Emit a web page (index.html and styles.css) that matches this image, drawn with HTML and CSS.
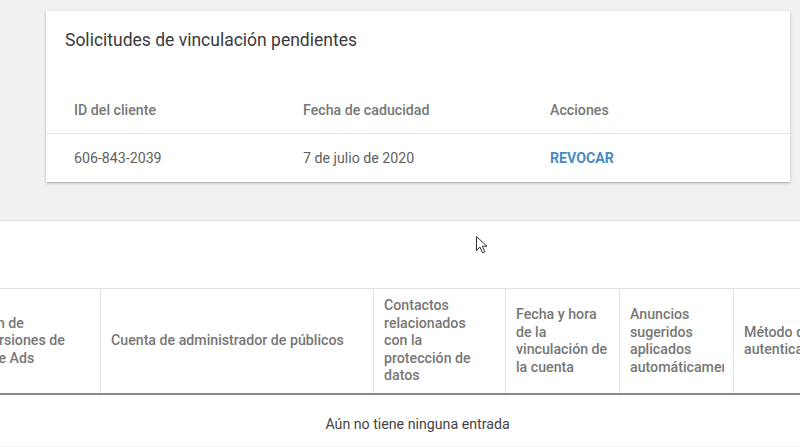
FILE: index.html
```html
<!DOCTYPE html>
<html lang="es">
    <head>
        <meta charset="UTF-8" />
        <link rel="stylesheet" href="styles.css">
    </head>
    <body>
        <div class="top">
            <div class="card">
                <div class="card_title">Solicitudes de vinculación pendientes</div>
                <div class="req_row req_head">
                    <div>ID del cliente</div>
                    <div>Fecha de caducidad</div>
                    <div>Acciones</div>
                </div>
                <div class="req_row req_data">
                    <div>606-843-2039</div>
                    <div>7 de julio de 2020</div>
                    <div><a class="revoke">REVOCAR</a></div>
                </div>
            </div>
        </div>
        <div class="panel">
            <table class="links">
                <colgroup>
                    <col style="width:150px"><col style="width:273px"><col style="width:132px">
                    <col style="width:114px"><col style="width:114px"><col style="width:152px">
                </colgroup>
                <thead>
                    <tr>
                        <th>Acción de<br>conversiones de<br>Google Ads</th>
                        <th>Cuenta de administrador de públicos</th>
                        <th>Contactos<br>relacionados<br>con la<br>protección de<br>datos</th>
                        <th>Fecha y hora<br>de la<br>vinculación de<br>la cuenta</th>
                        <th><div class="clip">Anuncios<br>sugeridos<br>aplicados<br>automáticamente</div></th>
                        <th>Método de<br>autenticación</th>
                    </tr>
                </thead>
            </table>
            <div class="empty">Aún no tiene ninguna entrada</div>
        </div>
        <svg class="cursor" width="14" height="20" viewBox="0 0 14 20">
            <path d="M1.5 1.5 L1.5 15.5 L5 12 L7.5 17.8 L9.8 16.8 L7.3 11.2 L12 11.2 Z" fill="#fff" stroke="#333" stroke-width="1" stroke-linejoin="round"/>
        </svg>
    </body>
</html>
```

FILE: styles.css
```css
body {
    margin: 0;
    background-color: #f1f1f1;
    font-family: Roboto, "Liberation Sans", sans-serif;
    overflow: hidden;
    height: 447px;
    position: relative;
}
.top {
    height: 220px;
    padding: 11px 10px 0 46px;
    box-sizing: border-box;
}
.card {
    width: 744px;
    background-color: #fff;
    box-shadow: 0 1px 3px rgba(0,0,0,0.22), 0 1px 1px rgba(0,0,0,0.1);
}
.card_title {
    padding: 17px 20px 35px 19px;
    font-size: 17.5px;
    line-height: 24px;
    color: #3a3a3a;
}
.req_row {
    display: grid;
    grid-template-columns: 229px 247px 1fr;
    align-items: center;
    padding-left: 28px;
    font-size: 14.2px;
}
.req_head {
    height: 46px;
    border-bottom: 1px solid #e3e3e3;
    color: #777;
    font-weight: 500;
}
.req_data {
    height: 48px;
    color: #5f5f5f;
}
.revoke {
    color: #4a8ac2;
    font-weight: 700;
}
.panel {
    background-color: #fff;
    border-top: 1px solid #e3e3e3;
    height: 226px;
    padding-top: 67px;
    box-sizing: border-box;
}
.links {
    margin-left: -50px;
    width: 935px;
    table-layout: fixed;
    border-collapse: collapse;
}
.links th {
    height: 104px;
    padding: 0 6px 0 10px;
    border-top: 1px solid #e3e3e3;
    border-left: 1px solid #e3e3e3;
    border-bottom: 2px solid #8a8a8a;
    text-align: left;
    vertical-align: middle;
    font-size: 14.2px;
    line-height: 17.5px;
    font-weight: 500;
    color: #777;
    white-space: nowrap;
    overflow: hidden;
}
.clip {
    overflow: hidden;
    width: 94px;
}
.empty {
    width: 835px;
    text-align: center;
    padding-top: 20px;
    font-size: 14.2px;
    line-height: 18px;
    color: #444;
}
.cursor {
    position: absolute;
    left: 475px;
    top: 235px;
}
```
